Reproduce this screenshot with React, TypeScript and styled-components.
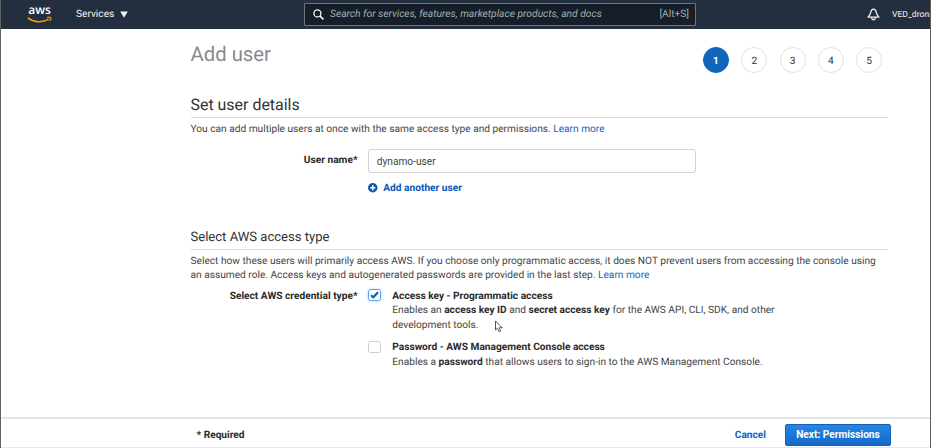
import React from "react";
import styled, { createGlobalStyle } from "styled-components";

const GlobalStyle = createGlobalStyle`
  * { box-sizing: border-box; }
  body {
    margin: 0;
    overflow: hidden;
    background: #fff;
    color: #444;
    font: 10.16px/14.5px Roboto, sans-serif;
    text-rendering: geometricPrecision;
  }
  h1, h2, h3, p { margin: 0; font-weight: 400; }
  b { color: #2b2b2b; font-weight: 700; }
`;

const Page = styled.div`
  position: relative;
  display: flex;
  flex-direction: column;
  width: 931px;
  height: 448px;
  overflow: hidden;
  border: solid #626262;
  border-width: 0 1px;
`;

const TopBar = styled.header`
  display: flex;
  align-items: center;
  flex: none;
  height: 29px;
  margin: 0 -1px;
  padding-left: 26px;
  background: #232f3e;
  border-left: 1px solid #17202c;
  color: #f2f3f3;
  white-space: nowrap;
  > * { flex: none; }
`;

const Logo = styled.a`
  display: flex;
  flex-direction: column;
  align-items: center;
  width: 25px;
  height: 21px;
  color: #fff;
  font: 600 12px/12px "Open Sans", sans-serif;
  svg { display: block; flex: none; margin-top: -0.5px; }
`;

const Services = styled.div`
  display: flex;
  align-items: center;
  gap: 5.5px;
  width: 251.5px;
  padding-left: 24px;
  svg { display: block; margin-top: -1px; }
`;

const BarText = styled.span`
  padding-top: 1.5px;
`;

const SearchBox = styled.div`
  display: flex;
  align-items: center;
  width: 392.5px;
  height: 23px;
  margin-top: -1px;
  padding: 0 6px 0 8px;
  background: #161e2a;
  border: 1px solid #6a7680;
  border-radius: 1px;
  color: #9fb0b0;
`;

const SearchHint = styled.span`
  flex: 1;
  padding: 1px 0 0 6.5px;
  font-size: 10.26px;
  font-style: italic;
`;

const Account = styled.div`
  display: flex;
  align-items: center;
  gap: 12.5px;
  margin-left: 170.5px;
  font-size: 8.6px;
  svg { flex: none; }
`;

const Main = styled.main`
  flex: 1;
  width: 888px;
  padding: 12px 1px 0 189.5px;
`;

const TitleRow = styled.div`
  display: flex;
  justify-content: space-between;
  height: 56px;
`;

const Title = styled.h1`
  color: #8a8a8a;
  font-size: 20.3px;
  line-height: 27px;
`;

const Steps = styled.ol`
  display: flex;
  gap: 12.25px;
  margin: 6px 6px 0 0;
  padding: 0;
  list-style: none;
`;

const Step = styled.li<{ $active?: boolean }>`
  display: flex;
  align-items: center;
  justify-content: center;
  width: 26px;
  height: 26px;
  padding-top: 4px;
  border: 1px solid ${(p) => (p.$active ? "#1166bb" : "#e2e2e2")};
  border-radius: 50%;
  background: ${(p) => (p.$active ? "#1166bb" : "#fff")};
  color: ${(p) => (p.$active ? "#fff" : "#333")};
  font-weight: ${(p) => (p.$active ? 700 : 400)};
`;

const Section = styled.section<{ $gap?: number }>`
  margin-top: ${(p) => p.$gap ?? 0}px;
`;

const SectionTitle = styled.h2<{ $small?: boolean }>`
  height: 21px;
  margin-bottom: 4.5px;
  border-bottom: 1px solid #dcdcdc;
  color: #333;
  font-size: ${(p) => (p.$small ? 13.07 : 15.95)}px;
  line-height: ${(p) => (p.$small ? 18 : 16)}px;
`;

const Copy = styled.p`
  white-space: nowrap;
`;

const Link = styled.a`
  color: #0f66c0;
`;

const FormRow = styled.div<{ $top: number }>`
  display: grid;
  grid-template-columns: 167px 1fr;
  column-gap: 10.8px;
  margin-top: ${(p) => p.$top}px;
`;

const FieldLabel = styled.label<{ $top: number }>`
  padding-top: ${(p) => p.$top}px;
  color: #2b2b2b;
  font-weight: 700;
  text-align: right;
`;

const TextInput = styled.input`
  display: block;
  width: 328px;
  height: 24px;
  padding: 1px 7.5px 0;
  border: 1px solid #d5d5d5;
  border-radius: 3px;
  outline: 0;
  color: #444;
  font: 10.16px/14px Roboto, sans-serif;
`;

const AddLink = styled.a`
  display: flex;
  align-items: center;
  gap: 5.5px;
  margin-top: 9px;
  color: #0757b8;
  font-weight: 700;
  svg { margin-top: -3px; }
`;

const Options = styled.div`
  display: flex;
  flex-direction: column;
  gap: 8px;
`;

const Option = styled.div`
  display: grid;
  grid-template-columns: 13px 1fr;
  column-gap: 11px;
  white-space: nowrap;
`;

const Check = styled.span<{ $on?: boolean }>`
  display: flex;
  align-items: center;
  justify-content: center;
  width: 13px;
  height: 12px;
  margin-top: -0.1px;
  border: 1px solid ${(p) => (p.$on ? "#5c9fee" : "#ccc")};
  border-radius: 2.5px;
  box-shadow: ${(p) => (p.$on ? "0 0 3px #a9d0fa" : "none")};
`;

const Footer = styled.footer`
  display: flex;
  align-items: flex-start;
  flex: none;
  height: 31px;
  padding: 5px 39px 0 195.5px;
  border-top: 2px solid #e5e5e5;
  border-bottom: 1px solid #e8e8e8;
  color: #2b2b2b;
  font-weight: 700;
`;

const Required = styled.span`
  padding-top: 4.5px;
`;

const Cancel = styled.a`
  margin: 0 19px 0 auto;
  padding-top: 4.5px;
  color: #0f5fbd;
`;

const NextButton = styled.button`
  width: 106px;
  height: 22px;
  padding: 0;
  border: 1px solid #1661b5;
  border-radius: 2px;
  background: linear-gradient(#2487e6, #1569c7);
  color: #fff;
  font: 700 10.16px/18px Roboto, sans-serif;
`;

const Pointer = styled.svg`
  position: absolute;
  left: 492.5px;
  top: 319.5px;
`;

const STEPS = [1, 2, 3, 4, 5];

export default function App() {
  return (
    <Page>
      <GlobalStyle />
      <TopBar>
        <Logo>
          aws
          <svg width="25" height="7" viewBox="0 0 25 7" fill="none" stroke="#ff9900">
            <path d="M.8 1.8C7 6.6 15.5 6.8 21.8 3.2" strokeWidth="1.5" />
            <path d="M20 1.5c1.6-.4 3.2-.4 3.7.1.4.6-.2 2.3-1.1 3.5" strokeWidth="1.1" />
          </svg>
        </Logo>
        <Services>
          <BarText>Services</BarText>
          <svg width="8" height="7" viewBox="0 0 8 7" fill="#f2f3f3">
            <path d="M.2.5h7.6L4 6.8z" />
          </svg>
        </Services>
        <SearchBox>
          <svg width="11" height="11" viewBox="0 0 11 11" fill="none" stroke="#fff">
            <circle cx="4.4" cy="4.4" r="3.5" strokeWidth="1.3" />
            <path d="M7 7l3.4 3.4" strokeWidth="1.6" />
          </svg>
          <SearchHint>Search for services, features, marketplace products, and docs</SearchHint>
          <BarText>[Alt+S]</BarText>
        </SearchBox>
        <Account>
          <svg width="13" height="13" viewBox="0 0 13 13" fill="none" stroke="#f2f3f3" strokeWidth="1.2">
            <path d="M6.5 1.1C4.7 1.1 4 2.5 3.7 4.4 3.4 6.5 2.5 7.6 1 9.1h11C10.5 7.6 9.6 6.5 9.3 4.4 9 2.5 8.3 1.1 6.5 1.1z" strokeLinejoin="round" />
            <path d="M4.6 9.4c.1 3 3.7 3 3.8 0" />
          </svg>
          <BarText>VED_drona</BarText>
        </Account>
      </TopBar>

      <Main>
        <TitleRow>
          <Title>Add user</Title>
          <Steps>
            {STEPS.map((n) => (
              <Step key={n} $active={n === 1}>{n}</Step>
            ))}
          </Steps>
        </TitleRow>

        <Section>
          <SectionTitle>Set user details</SectionTitle>
          <Copy>
            You can add multiple users at once with the same access type and permissions. <Link>Learn more</Link>
          </Copy>
          <FormRow $top={12}>
            <FieldLabel $top={5} htmlFor="user">User name*</FieldLabel>
            <div>
              <TextInput id="user" defaultValue="dynamo-user" />
              <AddLink>
                <svg width="9.5" height="9.5" viewBox="0 0 10 10">
                  <circle cx="5" cy="5" r="5" fill="#0757b8" />
                  <path d="M5 2.2v5.6M2.2 5h5.6" stroke="#fff" strokeWidth="1.6" />
                </svg>
                Add another user
              </AddLink>
            </div>
          </FormRow>
        </Section>

        <Section $gap={32.5}>
          <SectionTitle $small>Select AWS access type</SectionTitle>
          <Copy>
            Select how these users will primarily access AWS. If you choose only programmatic access, it does NOT prevent users from accessing the console using
            <br />
            an assumed role. Access keys and autogenerated passwords are provided in the last step. <Link>Learn more</Link>
          </Copy>
          <FormRow $top={6}>
            <FieldLabel $top={0}>Select AWS credential type*</FieldLabel>
            <Options>
              <Option>
                <Check $on>
                  <svg width="9" height="8" viewBox="0 0 9 8" fill="none" stroke="#0757b8" strokeWidth="2">
                    <path d="M1 4.2l2.3 2.1L8 1.3" />
                  </svg>
                </Check>
                <div>
                  <b>Access key - Programmatic access</b>
                  <br />
                  Enables an <b>access key ID</b> and <b>secret access key</b> for the AWS API, CLI, SDK, and other
                  <br />
                  development tools.
                </div>
              </Option>
              <Option>
                <Check />
                <div>
                  <b>Password - AWS Management Console access</b>
                  <br />
                  Enables a <b>password</b> that allows users to sign-in to the AWS Management Console.
                </div>
              </Option>
            </Options>
          </FormRow>
        </Section>
      </Main>

      <Footer>
        <Required>* Required</Required>
        <Cancel>Cancel</Cancel>
        <NextButton>Next: Permissions</NextButton>
      </Footer>

      <Pointer width="9" height="13" viewBox="0 0 9 13" fill="#fff" stroke="#444" strokeWidth=".9">
        <path d="M1.5 1v9l2-1.8 1.6 3.5 1.6-.7L5.2 7.7h2.9z" />
      </Pointer>
    </Page>
  );
}
